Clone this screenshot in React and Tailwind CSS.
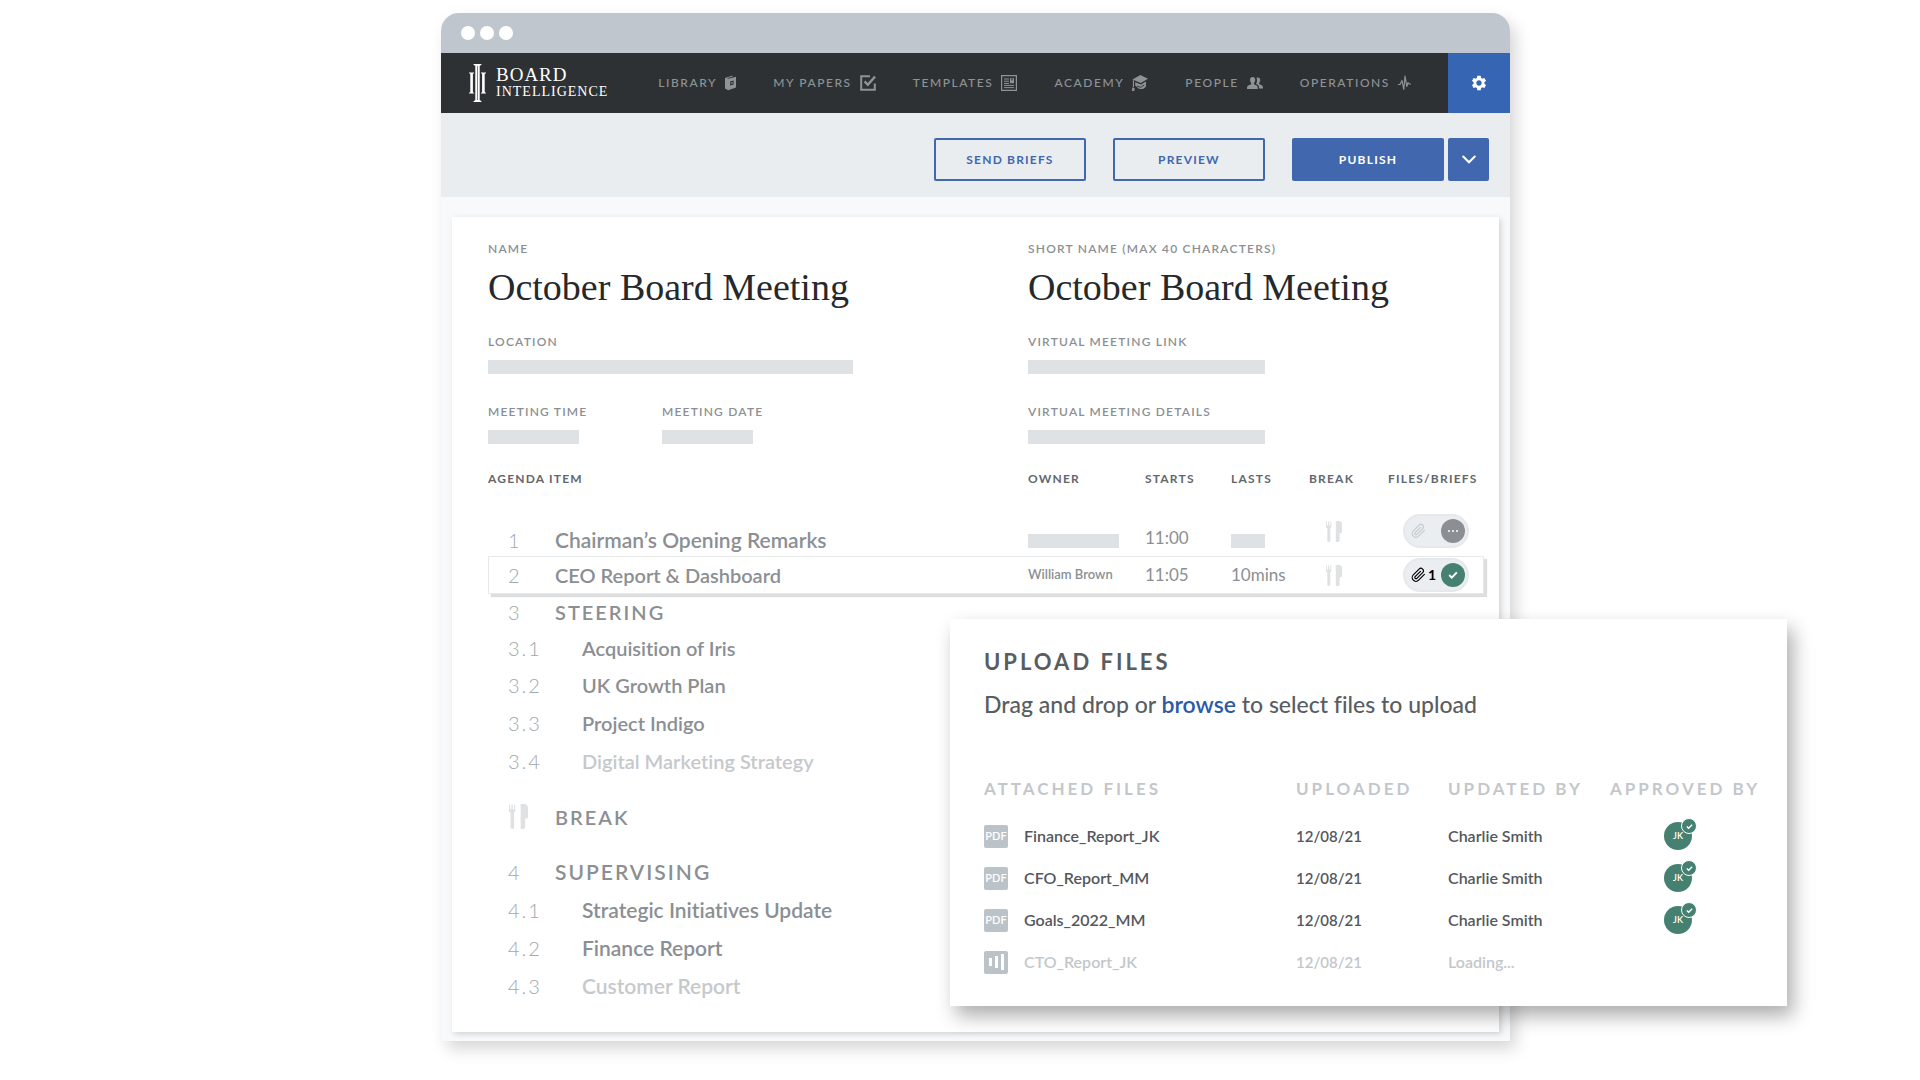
import React from 'react';
import { MdSettings } from 'react-icons/md';

const BookIcon = () => (
  <svg width="11" height="16" viewBox="0 0 11 16" fill="currentColor">
    <path d="M0 3 7.6.4v1L2.200 3.200l.8.5L11 1.800v10.800l-7.800 2.600L0 13.600z" />
    <path d="M5.200 6.600 8.600 5.600v3.800L5.200 10.400z" fill="#2d3134" />
    <path d="M6.200 7.500l1.400-.4v1.500l-1.400.4z" />
  </svg>
);

const PapersIcon = () => (
  <svg width="16" height="16" viewBox="0 0 16 16" fill="none" stroke="currentColor" strokeWidth="2">
    <path d="M10 1.2H1.2v13.6h13.6V8.5" />
    <path d="m4.6 6.4 3.2 3.4L15 1.6" strokeWidth="2.4" />
  </svg>
);

const TemplatesIcon = () => (
  <svg width="16" height="16" viewBox="0 0 16 16" fill="none" stroke="currentColor">
    <path d="M.6.6h14.8v14.8H.6z" strokeWidth="1.2" />
    <path d="M3 4h5M3 6.2h5M3 8.4h5M3 10.4h10M3 12.6h10" strokeWidth="1" />
    <path d="M9 3.2h4v5H9z" fill="currentColor" stroke="none" />
    <path d="M11 3.600v2" stroke="#2d3134" strokeWidth="1.2" />
  </svg>
);

const AcademyIcon = () => (
  <svg width="16" height="16" viewBox="0 0 16 16" fill="currentColor">
    <path d="M8.400 0 16 3.800 8.800 8 .4 4.600z" />
    <path d="M3.200 7.200 9 9.600l5-3v4.600c-1.600 2.600-4.600 3.600-7.400 2.400L3.200 10.400z" />
    <path d="M.9 5.200h1.100v7H.9z" />
    <path d="M.2 12.400l2.600 1L2.200 16H0z" />
    <path d="m5 11 3.600 1.400 3.600-2.400" fill="none" stroke="#2d3134" strokeWidth=".9" />
  </svg>
);

const PeopleIcon = () => (
  <svg width="16" height="12" viewBox="0 0 16 12" fill="currentColor">
    <path d="M5.6 0c1.7 0 2.7 1.2 2.6 3C8.100 4.600 7.600 5.400 7 6v1.200l2.600 1.200c.9.500 1.200 1.200 1.200 3.600H0C0 9.600.4 8.900 1.300 8.400L4.200 7.200V6C3.600 5.400 3.100 4.600 3 3 2.900 1.200 3.900 0 5.600 0z" />
    <path d="M10.800.6c1.500 0 2.500 1 2.400 2.600-.1 1.400-.5 2.200-1.100 2.800v1l2.500 1.300c1 .5 1.400 1.300 1.400 3.300h-3.900c0-2.400-.6-3.500-1.800-4.100L9 6.900c.6-.8 1-2.100 1-3.700 0-1-.2-1.700-.5-2.300.4-.2.800-.3 1.300-.3z" />
  </svg>
);

const OperationsIcon = () => (
  <svg width="13" height="16" viewBox="0 0 13 16" fill="none" stroke="currentColor" strokeWidth="1.200" strokeLinejoin="round">
    <path d="M0 9.500h2L4 5.500l1.800 9L7 1l1.800 10.500 1.200-4 1 1.500h2" />
  </svg>
);

const LogoMark = () => (
  <svg width="17" height="38" viewBox="0 0 17 38" fill="white">
    <path d="M4.600 0h7.800v1.100l-1.700.7v34.400l1.700.7V38H4.600v-1.100l1.700-.7V1.800L4.600 1.100z" />
    <path d="M0 8.400h5v.9l-1.100.5v18.400l1.100.5v.9H0v-.9l1.300-.5V9.800L0 9.300z" />
    <path d="M12 8.400h5v.9l-1.300.5v18.400l1.300.5v.9h-5v-.9l1.100-.5V9.800L12 9.300z" />
    <path d="M8.500 2v34" stroke="#2d3134" strokeWidth=".6" />
  </svg>
);

const CutleryIcon = ({ className = 'w-4 h-[21px]' }) => (
  <svg className={className} viewBox="0 0 16 21" fill="#dfe1e3">
    <path d="M0 .4h.9v4h1.100v-4h1.200v4h1.100v-4h1v5c0 1-.4 1.500-1 1.800v12.600c0 .7-.6 1.200-1.500 1.200s-1.500-.5-1.500-1.200V7.200C.5 6.900 0 6.400 0 5.400z" />
    <path d="M9.800 0H13c1.800 0 3 1.400 3 3.400v7c0 1-.5 1.800-1.400 1.800h-1v7.600c0 .7-.5 1.200-1.300 1.200H9.800z" />
  </svg>
);

const ClipIcon = ({ className }) => (
  <svg className={className} width="15" height="16" viewBox="0 0 24 24" fill="none" stroke="currentColor" strokeWidth="1.900" strokeLinecap="round" strokeLinejoin="round">
    <path d="m21.400 11.100-9.200 9.200a6 6 0 0 1-8.500-8.500l9.200-9.200a4 4 0 0 1 5.700 5.700l-9.200 9.200a2 2 0 0 1-2.800-2.800l8.500-8.500" />
  </svg>
);

const CheckIcon = ({ size = 10 }) => (
  <svg width={size} height={size} viewBox="0 0 10 10" fill="none" stroke="white" strokeWidth="2">
    <path d="m1.200 5 2.600 2.600L8.800 2.400" />
  </svg>
);

const navItems = [
  { label: 'LIBRARY', icon: BookIcon },
  { label: 'MY PAPERS', icon: PapersIcon },
  { label: 'TEMPLATES', icon: TemplatesIcon },
  { label: 'ACADEMY', icon: AcademyIcon },
  { label: 'PEOPLE', icon: PeopleIcon },
  { label: 'OPERATIONS', icon: OperationsIcon },
];

const agenda = [
  { no: '3', title: 'STEERING', type: 'section', height: 'h-9' },
  { no: '3.1', title: 'Acquisition of Iris', height: 'h-9' },
  { no: '3.2', title: 'UK Growth Plan', height: 'h-[38px]' },
  { no: '3.3', title: 'Project Indigo', height: 'h-[38px]' },
  { no: '3.4', title: 'Digital Marketing Strategy', faded: true, height: 'h-[38px]' },
  { title: 'BREAK', type: 'break', height: 'h-[73px]' },
  { no: '4', title: 'SUPERVISING', type: 'section', large: true, height: 'h-[38px]' },
  { no: '4.1', title: 'Strategic Initiatives Update', large: true, height: 'h-[38px]' },
  { no: '4.2', title: 'Finance Report', large: true, height: 'h-[38px]' },
  { no: '4.3', title: 'Customer Report', large: true, faded: true, height: 'h-[38px]' },
];

const files = [
  { name: 'Finance_Report_JK', date: '12/08/21', by: 'Charlie Smith', approved: true },
  { name: 'CFO_Report_MM', date: '12/08/21', by: 'Charlie Smith', approved: true },
  { name: 'Goals_2022_MM', date: '12/08/21', by: 'Charlie Smith', approved: true },
  { name: 'CTO_Report_JK', date: '12/08/21', by: 'Loading...', loading: true },
];

const Bar = ({ className }) => <div className={`h-3.5 bg-[#dfe2e5] ${className}`}></div>;

const Label = ({ children, ...props }) => (
  <label className="block text-xs leading-4 font-semibold tracking-widest text-[#8b8f93] whitespace-nowrap" {...props}>
    {children}
  </label>
);

const FilesPill = ({ count }) => (
  <button
    aria-label={count ? `${count} file attached` : 'Attach files'}
    className="flex items-center justify-between w-[66px] h-[34px] ml-[15px] pl-1.5 pr-0.5 rounded-full bg-[#ebeef1] border-2 border-[#e6e9ec]"
  >
    <span className="flex items-center gap-0.5">
      <ClipIcon className={count ? 'text-black' : 'text-[#c6cacd]'} />
      {count && <span className="text-sm leading-4 font-bold text-black">{count}</span>}
    </span>
    <span className={`flex items-center justify-center size-6 rounded-full shrink-0 ${count ? 'bg-[#458070]' : 'bg-[#8b8f94]'}`}>
      {count ? (
        <CheckIcon />
      ) : (
        <span className="flex gap-0.5">
          <span className="size-0.5 rounded-full bg-white"></span>
          <span className="size-0.5 rounded-full bg-white"></span>
          <span className="size-0.5 rounded-full bg-white"></span>
        </span>
      )}
    </span>
  </button>
);

const AgendaTitle = ({ no, title, type, faded, large, icon }) => {
  const isSub = no && no.includes('.');
  return (
    <div className={`flex items-center pl-5 leading-6 whitespace-nowrap ${large ? 'text-[21px]' : 'text-[20px]'}`}>
      <span className={`shrink-0 text-[20px] font-light tracking-[2px] text-[#a3a7ab] ${isSub ? 'w-[74px]' : 'w-[47px]'}`}>
        {icon || no}
      </span>
      <span className={`font-semibold ${type ? 'tracking-[2px]' : ''} ${faded ? 'text-[#c6c9cc]' : 'text-[#8b8f93]'}`}>
        {title}
      </span>
    </div>
  );
};

const TopNav = () => (
  <nav className="flex items-stretch h-[60px] bg-[#2d3134]">
    <a href="#home" className="flex items-center gap-2.5 pl-7 text-white" aria-label="Board Intelligence">
      <LogoMark />
      <span className="flex flex-col font-['Liberation_Serif',serif] font-medium whitespace-nowrap">
        <span className="text-[19px] leading-[18px] tracking-[1px]">BOARD</span>
        <span className="text-sm leading-4 tracking-[1px]">INTELLIGENCE</span>
      </span>
    </a>
    <div className="flex flex-1 items-center justify-between pl-[50px] pr-[37px]">
      {navItems.map(({ label, icon: Icon }) => (
        <a
          key={label}
          href="#nav"
          className="flex items-center gap-2 text-xs leading-4 font-medium tracking-[0.13em] text-[#8f9396] whitespace-nowrap"
        >
          {label}
          <Icon />
        </a>
      ))}
    </div>
    <button aria-label="Settings" className="flex items-center justify-center w-[62px] bg-[#3666b3] text-white">
      <MdSettings size={18} />
    </button>
  </nav>
);

const Toolbar = () => (
  <div className="flex items-start justify-end gap-[27px] pt-[25px] pb-4 pr-[21px] bg-[#eaedf0] text-xs font-bold tracking-widest">
    <button className="w-[152px] h-[43px] border-2 border-[#4167ae] rounded-xs text-[#4167ae]">SEND BRIEFS</button>
    <button className="w-[152px] h-[43px] border-2 border-[#4167ae] rounded-xs text-[#4167ae]">PREVIEW</button>
    <div className="flex gap-1">
      <button className="w-[152px] h-[43px] rounded-xs bg-[#4167ae] text-white">PUBLISH</button>
      <button aria-label="More publish options" className="flex items-center justify-center w-[41px] h-[43px] rounded-xs bg-[#4167ae]">
        <svg width="14" height="9" viewBox="0 0 14 9" fill="none" stroke="white" strokeWidth="2" strokeLinecap="round">
          <path d="m1.200 1.500 5.800 5.800 5.800-5.800" />
        </svg>
      </button>
    </div>
  </div>
);

const MeetingDetails = () => {
  const inputClass =
    "block w-full h-12 mt-1.5 bg-transparent outline-none font-['Liberation_Serif',serif] text-[38px] text-[#26292c]";
  return (
    <div className="grid grid-cols-[1fr_456px]">
      <div>
        <Label htmlFor="name">NAME</Label>
        <input id="name" type="text" defaultValue="October Board Meeting" className={inputClass} />
      </div>
      <div>
        <Label htmlFor="short-name">SHORT NAME (MAX 40 CHARACTERS)</Label>
        <input id="short-name" type="text" defaultValue="October Board Meeting" className={inputClass} />
      </div>
      <div className="mt-[23px]">
        <Label>LOCATION</Label>
        <Bar className="w-[365px] mt-2.5" />
      </div>
      <div className="mt-[23px]">
        <Label>VIRTUAL MEETING LINK</Label>
        <Bar className="w-[237px] mt-2.5" />
      </div>
      <div className="flex mt-[30px]">
        <div className="w-[174px]">
          <Label>MEETING TIME</Label>
          <Bar className="w-[91px] mt-2.5" />
        </div>
        <div>
          <Label>MEETING DATE</Label>
          <Bar className="w-[91px] mt-2.5" />
        </div>
      </div>
      <div className="mt-[30px]">
        <Label>VIRTUAL MEETING DETAILS</Label>
        <Bar className="w-[237px] mt-2.5" />
      </div>
    </div>
  );
};

const AgendaTable = () => (
  <table className="w-full mt-[27px] table-fixed border-separate border-spacing-0 text-left text-[#8b8f93]">
    <colgroup>
      <col />
      <col className="w-[117px]" />
      <col className="w-[86px]" />
      <col className="w-[78px]" />
      <col className="w-[79px]" />
      <col className="w-24" />
    </colgroup>
    <thead>
      <tr className="h-[35px] align-top text-xs leading-4 tracking-widest text-[#63676b] whitespace-nowrap">
        <th className="font-bold">AGENDA ITEM</th>
        <th className="font-bold">OWNER</th>
        <th className="font-bold">STARTS</th>
        <th className="font-bold">LASTS</th>
        <th className="font-bold">BREAK</th>
        <th className="font-bold">FILES/BRIEFS</th>
      </tr>
    </thead>
    <tbody>
      <tr className="h-[50px] align-bottom">
        <td className="pb-1"><AgendaTitle no="1" title="Chairman’s Opening Remarks" large /></td>
        <td className="pb-2"><Bar className="w-[91px]" /></td>
        <td className="pb-1.5 text-[17px] leading-6 font-normal">11:00</td>
        <td className="pb-2"><Bar className="w-[34px]" /></td>
        <td className="pl-[17px] align-middle"><CutleryIcon /></td>
        <td className="align-middle"><FilesPill /></td>
      </tr>
      <tr className="h-[38px] bg-white outline-1 -outline-offset-1 outline-[#e6e8ea] shadow-[3px_3px_1px_#dcdee0]">
        <td><AgendaTitle no="2" title="CEO Report & Dashboard" /></td>
        <td className="text-[13px] font-semibold whitespace-nowrap">William Brown</td>
        <td className="text-[17px] leading-6 font-normal">11:05</td>
        <td className="text-[17px] leading-6 font-normal">10mins</td>
        <td className="pl-[17px]"><CutleryIcon /></td>
        <td><FilesPill count={1} /></td>
      </tr>
      {agenda.map((item) => (
        <tr key={item.title} className={item.height}>
          <td colSpan={6}>
            <AgendaTitle {...item} icon={item.type === 'break' && <CutleryIcon className="w-[21px] h-[25px]" />} />
          </td>
        </tr>
      ))}
    </tbody>
  </table>
);

const UploadPanel = () => (
  <section className="col-start-3 col-span-2 row-start-1 self-end mb-[35px] pl-[34px] pt-[31px] pb-[23px] bg-white shadow-[6px_10px_18px_rgba(0,0,0,0.32)]">
    <h2 className="text-[22px] leading-6 font-bold tracking-[3px] text-[#595d61]">UPLOAD FILES</h2>
    <p className="mt-4 text-[23px] leading-7 font-medium text-[#595d61]">
      Drag and drop or <a href="#browse" className="font-semibold text-[#2d5aa8]">browse</a> to select files to upload
    </p>
    <table className="w-full mt-[59px] table-fixed text-left whitespace-nowrap">
      <colgroup>
        <col />
        <col className="w-[152px]" />
        <col className="w-[162px]" />
        <col className="w-[177px]" />
      </colgroup>
      <thead>
        <tr className="h-[38px] align-top text-[17px] leading-6 tracking-[3px] text-[#c3c7cb]">
          <th className="font-bold">ATTACHED FILES</th>
          <th className="font-bold">UPLOADED</th>
          <th className="font-bold">UPDATED BY</th>
          <th className="font-bold">APPROVED BY</th>
        </tr>
      </thead>
      <tbody>
        {files.map((file) => (
          <tr key={file.name} className={`h-[42px] text-base leading-6 font-semibold ${file.loading ? 'text-[#c3c7cb]' : 'text-[#54585c]'}`}>
            <td>
              <div className="flex items-center gap-4">
                {file.loading ? (
                  <span className="flex items-center justify-center gap-[3px] w-6 h-[23px] rounded-xs bg-[#bbc2c8]">
                    <span className="w-[3px] h-2 bg-white"></span>
                    <span className="w-[3px] h-3 bg-white"></span>
                    <span className="w-[3px] h-4 bg-white"></span>
                  </span>
                ) : (
                  <span className="flex items-center justify-center w-6 h-[23px] rounded-xs bg-[#bbc2c8] text-[11px] leading-3 font-semibold text-white">
                    PDF
                  </span>
                )}
                {file.name}
              </div>
            </td>
            <td className="text-[15px]">{file.date}</td>
            <td>{file.by}</td>
            <td>
              {file.approved && (
                <span className="relative flex items-center justify-center size-7 ml-[54px] rounded-full bg-[#458070] text-[9px] leading-3 text-white">
                  JK
                  <span className="absolute -top-1 -right-[5px] flex items-center justify-center size-4 rounded-full bg-[#458070] border border-white">
                    <CheckIcon size={7} />
                  </span>
                </span>
              )}
            </td>
          </tr>
        ))}
      </tbody>
    </table>
  </section>
);

export default function App() {
  return (
    <main className="min-h-screen bg-white font-[Lato,'Open_Sans',sans-serif] [font-variant-ligatures:none] grid grid-cols-[441fr_509fr_560fr_277fr_133fr] content-start pt-[13px]">
      <div className="col-start-2 col-span-2 row-start-1 rounded-t-[18px] bg-[#f7f9fb] shadow-[6px_8px_16px_rgba(0,0,0,0.16)]">
        {/* Window bar */}
        <div className="flex items-center gap-[5px] h-10 pl-5 rounded-t-[18px] bg-[#bfc6cd]">
          <span className="size-3.5 rounded-full bg-white"></span>
          <span className="size-3.5 rounded-full bg-white"></span>
          <span className="size-3.5 rounded-full bg-white"></span>
        </div>
        <TopNav />
        <Toolbar />

        {/* Meeting card */}
        <div className="mt-5 mx-[11px] mb-[9px] pt-6 pl-9 pr-[15px] pb-[27px] bg-white shadow-[2px_2px_6px_rgba(0,0,0,0.16)]">
          <MeetingDetails />
          <AgendaTable />
        </div>
      </div>
      <UploadPanel />
    </main>
  );
}
